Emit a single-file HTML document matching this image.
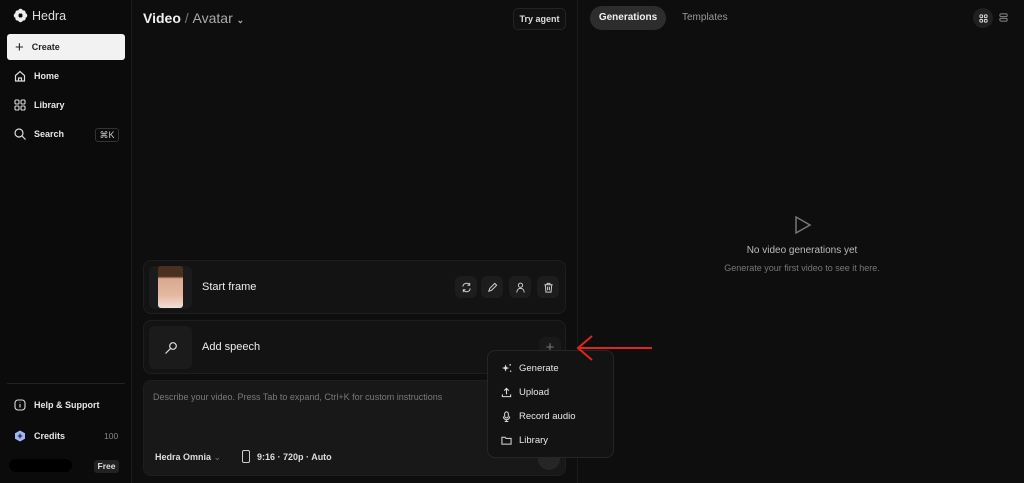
<!DOCTYPE html>
<html><head><style>
*{box-sizing:border-box;margin:0;padding:0}
body{width:1024px;height:483px;background:#0e0e0e;font-family:"Liberation Sans",sans-serif;color:#eee;position:relative;overflow:hidden}
.a{position:absolute}
.sb{left:0;top:0;width:132px;height:483px;background:#0b0b0b;border-right:1px solid #1c1c1c}
.nav{font-size:9px;font-weight:bold;color:#e6e6e6;display:flex;align-items:center;gap:8px}
.card{background:#131313;border:1px solid #1e1e1e;border-radius:8px}
.ib{width:22px;height:22px;border-radius:6px;background:#1d1d1d;display:flex;align-items:center;justify-content:center}
.mi{font-size:9.5px;color:#e8e8e8;display:flex;align-items:center;gap:7px;position:absolute;left:13px}
</style></head><body>
<div class="a sb">
 <div class="a" style="left:13px;top:8px;display:flex;align-items:center;gap:4px;font-size:12.5px;color:#ddd">
  <svg width="15" height="15" viewBox="0 0 14 14"><g fill="#eee"><circle cx="7" cy="3" r="2.3"/><circle cx="7" cy="11" r="2.3"/><circle cx="3" cy="7" r="2.3"/><circle cx="11" cy="7" r="2.3"/><circle cx="4.2" cy="4.2" r="2"/><circle cx="9.8" cy="4.2" r="2"/><circle cx="4.2" cy="9.8" r="2"/><circle cx="9.8" cy="9.8" r="2"/></g><circle cx="7" cy="7" r="1.6" fill="#0b0b0b"/></svg>Hedra</div>
 <div class="a nav" style="left:7px;top:34px;width:118px;height:26px;background:#f2f2f2;border-radius:3px;color:#222;padding-left:8px;font-weight:bold">
  <span style="font-size:15px;font-weight:normal">+</span>Create</div>
 <div class="a nav" style="left:14px;top:70px"><svg width="12" height="12" viewBox="0 0 12 12" fill="none" stroke="#ddd" stroke-width="1.2"><path d="M1.5 5.5L6 1.5l4.5 4V11h-9z"/><path d="M4.5 11V8h3v3"/></svg>Home</div>
 <div class="a nav" style="left:14px;top:99px"><svg width="12" height="12" viewBox="0 0 12 12" fill="none" stroke="#ddd" stroke-width="1.1"><rect x="1" y="1" width="4" height="4" rx="1"/><rect x="7" y="1" width="4" height="4" rx="1"/><rect x="1" y="7" width="4" height="4" rx="1"/><rect x="7" y="7" width="4" height="4" rx="1"/></svg>Library</div>
 <div class="a nav" style="left:14px;top:128px"><svg width="12" height="12" viewBox="0 0 12 12" fill="none" stroke="#ddd" stroke-width="1.2"><circle cx="5" cy="5" r="4"/><path d="M8 8l3.5 3.5"/></svg>Search</div>
 <div class="a" style="left:95px;top:128px;width:24px;height:14px;border:1px solid #333;border-radius:3px;font-size:9px;color:#ccc;text-align:center;line-height:12px">⌘K</div>
 <div class="a" style="left:7px;top:383px;width:118px;height:1px;background:#222"></div>
 <div class="a nav" style="left:14px;top:399px"><svg width="12" height="12" viewBox="0 0 12 12" fill="none" stroke="#ddd" stroke-width="1.1"><rect x="1" y="1" width="10" height="10" rx="3"/><path d="M6 5v3.5M6 3.3v.5"/></svg>Help &amp; Support</div>
 <div class="a nav" style="left:14px;top:430px"><svg width="12" height="12" viewBox="0 0 12 12"><path d="M6 .5l5 2.8v5.4L6 11.5 1 8.7V3.3z" fill="#9fb8f0"/><path d="M6 3.8v4.4M3.8 6h4.4" stroke="#1a2a55" stroke-width="1.3"/></svg>Credits</div>
 <div class="a" style="left:104px;top:431px;font-size:8.5px;color:#888">100</div>
 <div class="a" style="left:9px;top:459px;width:63px;height:13px;background:#000;border-radius:7px"></div>
 <div class="a" style="left:94px;top:460px;width:25px;height:13px;background:#222;border-radius:3px;font-size:8.5px;font-weight:bold;color:#ddd;text-align:center;line-height:13px">Free</div>
</div>
<div class="a" style="left:143px;top:10px;font-size:14px;font-weight:bold;color:#f0f0f0">Video <span style="color:#777;font-weight:normal">/</span> <span style="color:#aaa;font-weight:normal">Avatar</span> <span style="font-size:9px;color:#aaa">⌄</span></div>
<div class="a" style="left:513px;top:8px;width:53px;height:22px;border:1px solid #242424;border-radius:5px;background:#111;font-size:9px;font-weight:bold;color:#ddd;text-align:center;line-height:20px">Try agent</div>
<div class="a" style="left:577px;top:0;width:1px;height:483px;background:#1b1b1b"></div>
<div class="a card" style="left:143px;top:260px;width:423px;height:54px">
 <div class="a" style="left:5px;top:5px;width:43px;height:43px;background:#1b1b1b;border-radius:6px"></div>
 <div class="a" style="left:14px;top:5px;width:25px;height:42px;border-radius:3px;background:linear-gradient(#4a3020 0,#4a3020 25%,#d9a890 30%,#e6b8a0 70%,#f0e0d8 100%)"></div>
 <div class="a" style="left:58px;top:20px;font-size:11px;color:#eee">Start frame</div>
 <div class="a ib" style="left:311px;top:15px"><svg width="11" height="11" viewBox="0 0 12 12" fill="none" stroke="#ccc" stroke-width="1.1"><path d="M2 5a4 4 0 0 1 7.5-1.5M10 7a4 4 0 0 1-7.5 1.5M9.5 1v2.5H7M2.5 11V8.5H5"/></svg></div>
 <div class="a ib" style="left:337px;top:15px"><svg width="11" height="11" viewBox="0 0 12 12" fill="none" stroke="#ccc" stroke-width="1.1"><path d="M2 10l1-3 5.5-5.5 2 2L5 9z"/></svg></div>
 <div class="a ib" style="left:365px;top:15px"><svg width="11" height="11" viewBox="0 0 12 12" fill="none" stroke="#ccc" stroke-width="1.1"><circle cx="6" cy="3.5" r="2.3"/><path d="M2 11.5c0-3 1.8-4.5 4-4.5s4 1.5 4 4.5"/></svg></div>
 <div class="a ib" style="left:393px;top:15px"><svg width="11" height="11" viewBox="0 0 12 12" fill="none" stroke="#ccc" stroke-width="1.1"><path d="M1.5 3h9M4.5 3V1.5h3V3M2.5 3l.7 8h5.6l.7-8M5 5v4M7 5v4"/></svg></div>
</div>
<div class="a card" style="left:143px;top:320px;width:423px;height:54px">
 <div class="a" style="left:5px;top:5px;width:43px;height:43px;background:#1b1b1b;border-radius:6px;display:flex;align-items:center;justify-content:center"><svg width="14" height="14" viewBox="0 0 14 14" fill="none" stroke="#ddd" stroke-width="1.2"><circle cx="9" cy="5" r="3.3"/><path d="M6.7 7.3L1.5 12.5"/></svg></div>
 <div class="a" style="left:58px;top:20px;font-size:11px;color:#eee">Add speech</div>
 <div class="a" style="left:395px;top:16px;width:22px;height:22px;border-radius:6px;background:#191919;color:#777;text-align:center;font-size:15px;line-height:21px">+</div>
</div>
<div class="a card" style="left:143px;top:380px;width:423px;height:96px;background:#181818">
 <div class="a" style="left:9px;top:11px;font-size:9px;color:#7a7a7a">Describe your video. Press Tab to expand, Ctrl+K for custom instructions</div>
 <div class="a" style="left:11px;top:71px;font-size:9px;font-weight:bold;color:#ddd">Hedra Omnia <span style="color:#777;font-weight:normal">⌄</span></div>
 <div class="a" style="left:98px;top:69px;width:8px;height:13px;border:1.2px solid #ccc;border-radius:2px"></div>
 <div class="a" style="left:113px;top:71px;font-size:9px;font-weight:bold;color:#ddd">9:16 · 720p · Auto</div>
 <div class="a" style="left:394px;top:67px;width:22px;height:22px;border-radius:11px;background:#262626"></div>
</div>
<div class="a" style="left:487px;top:350px;width:127px;height:108px;background:#131313;border:1px solid #262626;border-radius:8px">
 <div class="mi" style="top:12px"><svg width="11" height="11" viewBox="0 0 12 12" fill="#ddd"><path d="M5 1.5l1 3 3 1-3 1-1 3-1-3-3-1 3-1z"/><circle cx="10" cy="2" r=".9"/><circle cx="10.5" cy="9" r=".8"/></svg>Generate</div>
 <div class="mi" style="top:36px"><svg width="11" height="11" viewBox="0 0 12 12" fill="none" stroke="#ddd" stroke-width="1.2"><path d="M6 8V1.5M3.5 4L6 1.5 8.5 4M1.5 8v2.5h9V8"/></svg>Upload</div>
 <div class="mi" style="top:60px"><svg width="11" height="11" viewBox="0 0 12 12" fill="none" stroke="#ddd" stroke-width="1.1"><rect x="4" y="1" width="4" height="6.5" rx="2"/><path d="M2.5 6a3.5 3.5 0 0 0 7 0M6 9.5V11.5M4 11.5h4"/></svg>Record audio</div>
 <div class="mi" style="top:84px"><svg width="11" height="11" viewBox="0 0 12 12" fill="none" stroke="#ddd" stroke-width="1.1"><path d="M1 2.5h3.5l1 1.2H11V10H1z"/></svg>Library</div>
</div>
<svg class="a" style="left:574px;top:334px" width="82" height="28" viewBox="0 0 82 28"><path d="M78 14H6M18 2L4 14l14 12" fill="none" stroke="#e0261c" stroke-width="2"/></svg>
<div class="a" style="left:590px;top:6px;width:76px;height:24px;border-radius:12px;background:#2d2d2d;font-size:10px;font-weight:bold;color:#f0f0f0;text-align:center;line-height:24px">Generations</div>
<div class="a" style="left:682px;top:12px;font-size:10px;color:#999">Templates</div>
<div class="a" style="left:973px;top:8px;width:20px;height:20px;border-radius:10px;background:#202020;display:flex;align-items:center;justify-content:center"><svg width="9" height="9" viewBox="0 0 10 10" fill="none" stroke="#ddd" stroke-width="1.1"><rect x="1" y="1" width="3" height="3" rx="1"/><rect x="6" y="1" width="3" height="3" rx="1"/><rect x="1" y="6" width="3" height="3" rx="1"/><rect x="6" y="6" width="3" height="3" rx="1"/></svg></div>
<svg class="a" style="left:999px;top:13px" width="9" height="9" viewBox="0 0 10 10" fill="none" stroke="#888" stroke-width="1.1"><rect x="1" y="1" width="8" height="3" rx="1"/><rect x="1" y="6" width="8" height="3" rx="1"/></svg>
<svg class="a" style="left:794px;top:215px" width="18" height="20" viewBox="0 0 18 20" fill="none" stroke="#777" stroke-width="1.5"><path d="M2 2l14 8-14 8z"/></svg>
<div class="a" style="left:700px;top:245px;width:204px;text-align:center;font-size:10px;color:#bbb">No video generations yet</div>
<div class="a" style="left:700px;top:263px;width:204px;text-align:center;font-size:9px;color:#777">Generate your first video to see it here.</div>
</body></html>
